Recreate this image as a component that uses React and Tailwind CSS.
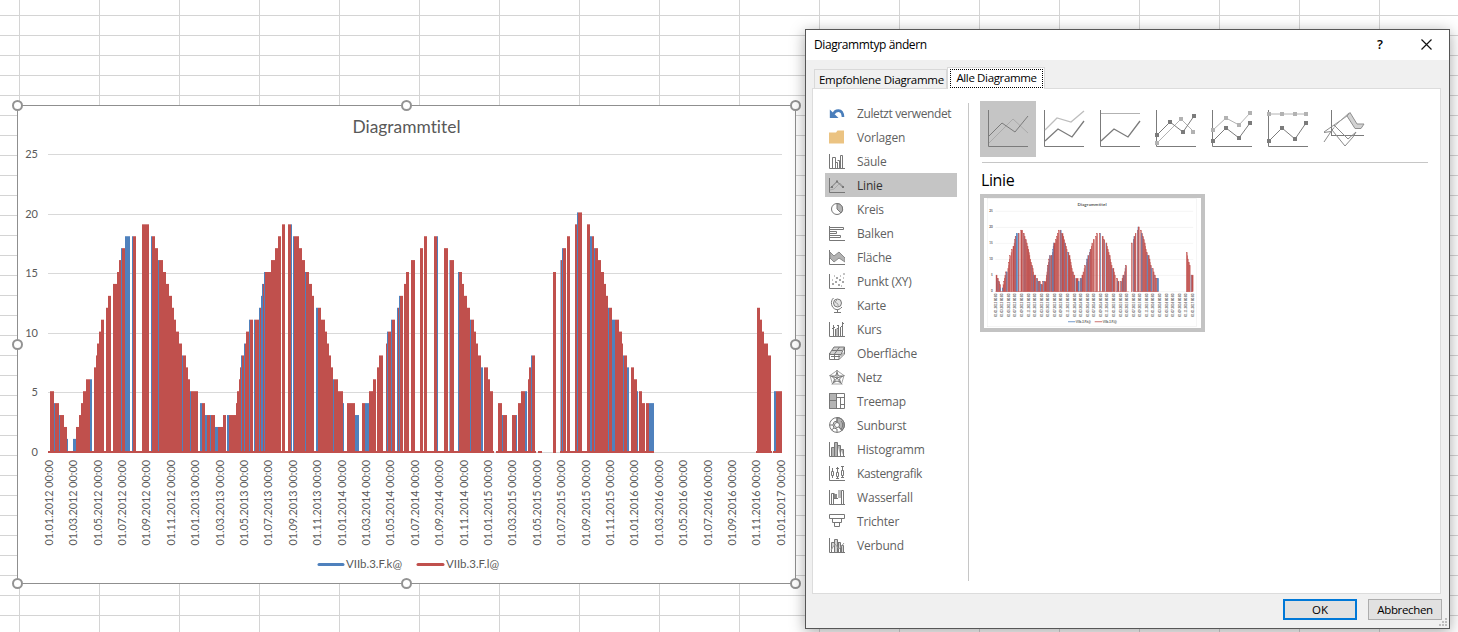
import React from 'react';
import clsx from 'clsx';

// [x start, x end, value, series] - series defaults to the second (red) one
const BARS = [
  [50, 54, 5], [54, 55, 4, 'b'], [55, 59, 4], [59, 60, 3, 'b'], [60, 64, 3], [64, 67, 2], [67, 68, 1, 'b'],
  [73, 76, 1, 'b'], [76, 79, 2], [79, 81, 3], [81, 83, 4], [83, 86, 5], [86, 90, 6], [90, 92, 6, 'b'],
  [94, 96, 7], [96, 97, 8], [97, 99, 9], [99, 101, 10], [101, 104, 11], [106, 108, 12], [108, 111, 13],
  [113, 117, 14], [117, 119, 15], [119, 121, 16], [121, 122, 17, 'b'], [122, 125, 17], [125, 130, 18, 'b'],
  [132, 133, 18, 'b'], [133, 136, 18], [142, 149, 19], [151, 152, 18, 'b'], [152, 155, 18], [155, 158, 17],
  [158, 159, 16, 'b'], [159, 163, 16], [163, 166, 15], [166, 169, 14], [169, 172, 13], [172, 174, 12],
  [174, 176, 11], [176, 179, 10], [179, 182, 9], [182, 183, 8, 'b'], [183, 186, 8], [186, 188, 7],
  [188, 190, 6], [190, 191, 5, 'b'], [191, 198, 5], [200, 202, 4, 'b'], [202, 205, 4], [205, 207, 3, 'b'],
  [207, 210, 3], [210, 211, 3, 'b'], [211, 215, 3], [215, 218, 2, 'b'], [218, 223, 2], [223, 226, 3],
  [227, 229, 3, 'b'], [229, 236, 3], [236, 237, 4], [237, 239, 5], [239, 240, 6], [240, 241, 7],
  [241, 242, 8, 'b'], [242, 244, 8], [244, 245, 9, 'b'], [245, 246, 9], [246, 249, 10], [249, 250, 11, 'b'],
  [250, 253, 11], [254, 255, 11, 'b'], [255, 259, 11], [259, 260, 12, 'b'], [260, 261, 12],
  [261, 262, 13, 'b'], [262, 263, 14, 'b'], [263, 264, 14], [264, 265, 15, 'b'], [265, 271, 15],
  [271, 275, 16], [275, 278, 17], [278, 281, 18], [282, 285, 19], [288, 291, 19], [291, 292, 19, 'b'],
  [293, 294, 18, 'b'], [294, 299, 18], [299, 302, 17], [302, 305, 16], [305, 306, 15, 'b'], [306, 309, 15],
  [309, 312, 14], [312, 314, 13], [316, 318, 12, 'b'], [318, 321, 12], [321, 325, 11], [325, 327, 10],
  [327, 329, 9], [329, 331, 8], [331, 333, 7], [333, 334, 6, 'b'], [334, 338, 6], [338, 343, 5],
  [343, 344, 4, 'b'], [347, 355, 4], [355, 359, 3, 'b'], [362, 365, 4], [365, 369, 4, 'b'], [369, 373, 5],
  [373, 376, 6], [377, 379, 7], [379, 383, 8], [386, 387, 9], [387, 388, 10, 'b'], [388, 391, 10],
  [391, 392, 11, 'b'], [392, 395, 11], [397, 398, 12, 'b'], [398, 399, 12], [399, 400, 13, 'b'],
  [400, 403, 13], [404, 406, 14], [406, 409, 15], [411, 415, 16], [420, 423, 17], [424, 427, 18],
  [434, 437, 18], [437, 438, 18, 'b'], [444, 448, 17], [449.4, 450, 16, 'b'], [450, 454, 16],
  [458, 459, 15, 'b'], [459, 462, 15], [462, 464, 14], [464, 467, 13], [467, 470, 12], [470, 471, 11, 'b'],
  [471, 474, 11], [474, 476, 10], [476, 478, 9], [478, 481, 8], [481, 483, 7, 'b'], [484, 488, 7],
  [488, 490, 6], [490, 493, 5], [498, 502, 4], [502, 503, 3, 'b'], [503, 507, 3], [512, 516, 3],
  [516, 517, 3, 'b'], [518, 521, 4], [521, 525, 5], [525, 527, 5, 'b'], [528, 529, 6], [529, 531, 7],
  [531, 532, 8, 'b'], [532, 535, 8], [553, 556, 15], [560.4, 561, 16, 'b'], [561, 562, 16],
  [562, 563, 17, 'b'], [563, 566, 17], [567, 570, 18], [575, 577, 19], [577, 578, 20, 'b'], [578, 582, 20],
  [587, 590, 19], [590, 592, 18, 'b'], [592, 594, 18], [594, 595, 17, 'b'], [595, 598, 17], [598, 601, 16],
  [601, 604, 15], [604, 606, 14], [606, 608, 13], [608, 609, 12, 'b'], [609, 612, 12], [612, 615, 11, 'b'],
  [615, 619, 11], [619, 622, 10], [622, 623, 9], [623, 624, 8, 'b'], [624, 627, 8], [627, 629, 7, 'b'],
  [631, 634, 7], [634, 637, 6], [637, 638, 5, 'b'], [639, 642, 5], [642, 645, 4], [646, 649, 4],
  [649, 654, 4, 'b'], [757, 760, 12], [760, 762, 11], [762, 764, 10], [764, 768, 9], [768, 771, 8],
  [774, 776, 5, 'b'], [776, 782, 5],
];

const ZERO_RUNS = [[48, 494], [496, 536], [538, 542], [553, 556], [560, 654], [756, 772], [773, 782]];

const GRID = [[25, 154], [20, 214], [15, 273], [10, 333], [5, 392], [0, 452]];

const DATES = Array.from({ length: 31 }, (_, i) => {
  const month = ['01', '03', '05', '07', '09', '11'][i % 6];
  return `01.${month}.${2012 + Math.floor(i / 6)} 00:00`;
});

const BLUE = '#4f81bd';
const RED = '#c0504d';

// preview: small version, where bars get a stroke so that they close up when scaled down
function Chart({ width, height, border, preview }) {
  return (
    <svg
      width={width}
      height={height}
      viewBox="17 105 779 479"
      className="block overflow-visible [font-variant-ligatures:none]"
      fontFamily="Lato, sans-serif"
      fontWeight={preview ? 700 : 400}
      fill="#595959"
    >
      <rect x="17.5" y="105.5" width="778" height="478" fill="#fff" stroke={border} />
      <text x="352.5" y="133" fontSize="16.5" textLength="108" lengthAdjust="spacingAndGlyphs">Diagrammtitel</text>
      {GRID.map(([value, y]) => (
        <g key={value}>
          <line x1="48" x2="782" y1={y + 0.5} y2={y + 0.5} stroke="#d9d9d9" />
          <text x="38" y={y + 3.5} fontSize="11" textAnchor="end">{value}</text>
        </g>
      ))}
      {BARS.map(([x1, x2, value, series]) => (
        <rect
          key={x1}
          x={x1}
          y={450.8 - value * 11.92}
          width={x2 - x1}
          height={value * 11.92 + 1.2}
          fill={series === 'b' ? BLUE : RED}
          stroke={series === 'b' ? BLUE : RED}
          strokeWidth={preview ? 1.3 : 0}
        />
      ))}
      {ZERO_RUNS.map(([x1, x2]) => (
        <rect key={x1} x={x1} y="451" width={x2 - x1} height="2" fill={RED} />
      ))}
      {DATES.map((date, i) => (
        <text
          key={date}
          transform={`translate(${52.8 + i * 24.4} 545.5) rotate(-90)`}
          fontSize="11"
          textLength="85.5"
          lengthAdjust="spacingAndGlyphs"
        >
          {date}
        </text>
      ))}
      <g fontSize="11" strokeWidth="3" strokeLinecap="round">
        <line x1="319" x2="343" y1="564.5" y2="564.5" stroke={BLUE} />
        <text x="346" y="568" textLength="56" lengthAdjust="spacingAndGlyphs">VIIb.3.F.k@</text>
        <line x1="418" x2="443" y1="564.5" y2="564.5" stroke={RED} />
        <text x="446" y="568" textLength="53" lengthAdjust="spacingAndGlyphs">VIIb.3.F.l@</text>
      </g>
    </svg>
  );
}

const HANDLES = [
  'left-[-5px] top-[-5px]', 'left-[384px] top-[-5px]', 'left-[773px] top-[-5px]',
  'left-[-5px] top-[234px]', 'left-[773px] top-[234px]',
  'left-[-5px] top-[473px]', 'left-[384px] top-[473px]', 'left-[773px] top-[473px]',
];

const AXES = <path d="M.5 1v14.5H16" />;

const TYPES = [
  {
    name: 'Zuletzt verwendet',
    icon: (
      <>
        <path d="M4.500 9C6 5 13.500 3 14 12" stroke="#4a7ebb" strokeWidth="2.600" />
        <path d="M.8 4.500V13H9.500z" fill="#4a7ebb" stroke="none" />
      </>
    ),
  },
  {
    name: 'Vorlagen',
    icon: <path d="M0 3.500h7l1.500-2h6.500v13H0z" fill="#ebc382" stroke="none" />,
  },
  {
    name: 'Säule',
    icon: <>{AXES}<path d="M3.500 15V4.500h3V15M6.500 9.500h2V15M8.500 7.500h2V15M11.500 15V2.500h2V15" /></>,
  },
  {
    name: 'Linie',
    icon: (
      <>
        {AXES}
        <path d="M1 13l4-1 6-6 4 4" stroke="#aaa" />
        <path d="M1.500 11L8 4.500l6 6" />
        <path d="M2 9h2v2H2zM7 3.500h2v2H7zM13 9h2v2h-2z" fill="#777" stroke="none" />
      </>
    ),
  },
  {
    name: 'Kreis',
    icon: <><circle cx="8" cy="8" r="5.500" /><path d="M8 2.500V8l4 4A5.500 5.500 0 0 0 8 2.500z" fill="#b3b3b3" /></>,
  },
  {
    name: 'Balken',
    icon: <>{AXES}<path d="M1 2.500h13.500v2H1M1 6.500h6.500v2H1M1 10.500h10.500v2H1" /></>,
  },
  {
    name: 'Fläche',
    icon: (
      <>
        {AXES}
        <path d="M1 3l4 4 5-4 6 6v4l-6-4-5 4-4-4z" fill="#b3b3b3" stroke="#8a8a8a" />
      </>
    ),
  },
  {
    name: 'Punkt (XY)',
    icon: (
      <>
        {AXES}
        <path
          d="M3 11h2M4 10v2M3 7h1M7 5h2M8 4v2M11 3h1M14 1h2M6 9h2M7 8v2M10 7h2M11 6v2M14 5h1M9 12h2M10 11v2M13 9h2M14 8v2M5 3h1M12 13h1"
          stroke="#888"
        />
      </>
    ),
  },
  {
    name: 'Karte',
    icon: (
      <>
        <circle cx="8.500" cy="6" r="4" fill="#e3e3e3" />
        <path d="M4.500 1C1 4 2 11 7 12.500c2 .4 4-.2 6-2.500M8.500 12.500V15M5 15.500h7" />
        <path d="M8 3l-2 2 3 2v2" stroke="#a0a0a0" />
      </>
    ),
  },
  {
    name: 'Kurs',
    icon: (
      <>
        {AXES}
        <path d="M4.500 4v11M3 7.500h1.500M4.500 6.500H6M6.500 8v7M9.500 4v11M8 4.500h1.500M9.500 7.500H8v7.500M11.500 6v9M13.500 1v14M12 5.500h1.500M13.500 2.500H15" />
      </>
    ),
  },
  {
    name: 'Oberfläche',
    icon: (
      <>
        <path d="M1 8l4-6h10.500L12 9.500H1z" fill="#d0d0d0" />
        <path d="M.5 8v6.500h9.500l5.500-5.500V2M10 14.500V10M3 5.500h10M5.500 14.500V9l5-7M2 11.500h9l4-4" />
      </>
    ),
  },
  {
    name: 'Netz',
    icon: (
      <>
        <path d="M8 1.500l7 5-2.500 8.500h-9L1 6.500z" stroke="#a5a5a5" />
        <path d="M8 1v8M8 9L.5 6.500M8 9l7.500-2.500M8 9l-5 6.500M8 9l5 6.500M8 3.500l1.500 3.500 4 0-3 3 1 3.500L8 12l-3.500 1.500 1-3.500-3-3h4z" />
      </>
    ),
  },
  {
    name: 'Treemap',
    icon: (
      <>
        <path d="M.5.500h7v15h-7z" fill="#b3b3b3" />
        <path d="M.5.500h15v15H.500zM.5 7.500h7M7.500 4.500h8M11.500 4.500v11M11.500 11.500h4" />
      </>
    ),
  },
  {
    name: 'Sunburst',
    icon: (
      <>
        <path d="M8 .6V8l5 5.500A7.400 7.400 0 0 0 8 .6z" fill="#b3b3b3" />
        <circle cx="8" cy="8" r="7.400" />
        <path d="M8 5.500V.6M12 4a5.500 5.500 0 0 1 0 8" />
        <circle cx="8" cy="8" r="2.500" fill="#fff" />
        <path d="M4 8a4 4 0 0 1 4-4M4 8H.6M4 8a4 4 0 0 0 4 4M5 11l-2.500 2M8 12v3.400M10 10l3 3.500" />
      </>
    ),
  },
  {
    name: 'Histogramm',
    icon: <>{AXES}<path d="M2.500 15V6.500h3V1.500h3V15M5.500 6v9M8.500 4.500h3V15M11.500 8.500h3V15" fill="#b3b3b3" /></>,
  },
  {
    name: 'Kastengrafik',
    icon: (
      <>
        {AXES}
        <path d="M3.500 3v3M2.500 6.500h2v4h-2zM3.500 11v2M8.500 2v5M7.500 7.500h2v4h-2zM8.500 12v1.500M13.500 1v4M12.500 5.500h2v5h-2zM13.500 11v2M12 1.500h3M7 3.500h3M12 12.500h3M7 13.500h3" />
      </>
    ),
  },
  {
    name: 'Wasserfall',
    icon: (
      <>
        {AXES}
        <path d="M9 1h3v8H9z" fill="#bbb" stroke="none" />
        <path d="M5 5h3v4H5z" fill="#8a8a8a" stroke="none" />
        <path d="M2.500 15V4.500h3M4.500 5v10M5 9.500h4M12.500 15V1.500h2V15" />
      </>
    ),
  },
  {
    name: 'Trichter',
    icon: <path d="M.5 1.500h15v4H.500zM3.500 5.500h9v4h-9zM5.500 9.500h5v4h-5z" />,
  },
  {
    name: 'Verbund',
    icon: (
      <>
        {AXES}
        <path d="M2.500 15V5.500h3M5.500 15V2.500h3V15M9.500 5v10M9.500 5.500h2V15M12.500 15V8.500h2V15" fill="#d2d2d2" />
        <path d="M2 13l4-6 4 5 5-6" stroke="#999" />
      </>
    ),
  },
];

const DARK = '#7b7b7b';
const LIGHT = '#b2b2b2';

function Markers({ points, color }) {
  return points.map(([x, y]) => <rect key={x} x={x - 2} y={y - 2} width="4" height="4" fill={color} stroke="none" />);
}

const SUBTYPES = [
  <>
    <path d="M9 42l24-24 15 14" stroke="#aaa" />
    <path d="M9 35l13-13 13 9 13-16" stroke={DARK} />
  </>,
  <>
    <path d="M9 29l12-12 14 4 13-11" stroke="#bdbdbd" strokeWidth="1.300" />
    <path d="M9 40l13-12 14 8 12-16" stroke={DARK} strokeWidth="1.300" />
  </>,
  <>
    <path d="M9 12.500h39" stroke={LIGHT} />
    <path d="M9 40l13-12 14 8 12-16" stroke={DARK} strokeWidth="1.300" />
  </>,
  <>
    <path d="M9 42l24-24 13 13" stroke={LIGHT} />
    <path d="M9 34l13-13 13 10 11-16" stroke={DARK} />
    <Markers points={[[9, 42], [33, 18], [45, 31]]} color={LIGHT} />
    <Markers points={[[9, 34], [22, 21], [35, 31], [46, 15]]} color={DARK} />
  </>,
  <>
    <path d="M9 29l13-12 13 7 11-12" stroke={LIGHT} />
    <path d="M9 40l13-13 13 10 11-15" stroke={DARK} />
    <Markers points={[[9, 29], [22, 17], [35, 24], [46, 12]]} color={LIGHT} />
    <Markers points={[[9, 40], [22, 27], [35, 37], [46, 22]]} color={DARK} />
  </>,
  <>
    <path d="M9 13h37" stroke={LIGHT} />
    <path d="M9 40l13-13 13 11 11-16" stroke={DARK} />
    <Markers points={[[9, 13], [22, 13], [35, 13], [46, 13]]} color={LIGHT} />
    <Markers points={[[9, 40], [22, 27], [35, 38], [46, 22]]} color={DARK} />
  </>,
];

function Icon3D() {
  return (
    <svg width="56" height="56" fill="none" stroke={DARK}>
      <path d="M15.500 9v26M15 34.500h33" />
      <path d="M31 15l3-3.500 7 11.500h7l-3 4.500h-6z" fill="#d2d2d2" stroke="#8f8f8f" />
      <path d="M18 25.500l15-13.500M18 24l13-9" stroke="#9a9a9a" />
      <path d="M8 31l10-7 14 14 8-7-3 5-8 9-13-16-8 12M8 31.500l7-1 3-4" stroke="#8a8a8a" />
    </svg>
  );
}

function ChangeTypeDialog() {
  return (
    <div className="absolute left-[805px] top-[29px] flex h-[600px] w-[645px] flex-col border border-[#565656] bg-[#f0f0f0] text-xs text-black shadow-[0_3px_14px_rgba(0,0,0,0.35)]">
      <header className="flex h-[30px] shrink-0 items-center justify-between bg-white pl-2 pr-[17px]">
        <span className="tracking-[-0.4px]">Diagrammtyp ändern</span>
        <div className="flex items-center gap-[38px]">
          <span className="text-[13px] font-semibold">?</span>
          <svg width="11" height="11" stroke="#111" strokeWidth="1.200">
            <path d="M.5.500l10 10M10.500.500l-10 10" />
          </svg>
        </div>
      </header>

      {/* Tabs */}
      <nav className="relative z-10 -mb-px mt-[7px] flex h-[22px] shrink-0 items-end pl-2">
        <div className="mb-px flex h-[19px] w-[133px] items-center border border-b-0 border-[#d9d9d9] pl-1 pt-0.5 text-[11.5px] whitespace-nowrap">
          <span className="tracking-[-0.28px]">Empfohlene Diagramme</span>
        </div>
        <div className="h-[22px] w-[98px] border border-b-0 border-[#d9d9d9] bg-white pl-0.5 pr-px pt-px">
          <div className="flex h-[19px] items-center justify-center border border-dotted border-black pb-px text-[11.5px] tracking-[-0.36px] whitespace-nowrap">
            Alle Diagramme
          </div>
        </div>
      </nav>

      <main className="ml-1.5 flex h-[506px] w-[629px] shrink-0 border border-[#dcdcdc] bg-white">
        <ul className="ml-3 mt-3 w-[132px]">
          {TYPES.map(({ name, icon }) => (
            <li
              key={name}
              className={clsx(
                'flex h-6 items-center gap-3 pl-1 whitespace-nowrap',
                name === 'Linie' ? 'bg-[#c5c5c5] text-[#333]' : 'text-[#5f5f5f]',
                name.length > 11 ? 'tracking-[-0.38px]' : 'tracking-[-0.18px]'
              )}
            >
              <svg width="16" height="16" viewBox="0 0 16 16" fill="none" stroke="#777" className="shrink-0">
                {icon}
              </svg>
              <span className="pt-px">{name}</span>
            </li>
          ))}
        </ul>
        <div className="ml-[11px] mt-3.5 h-[478px] w-px bg-[#c6c6c6]" />

        {/* Subtypes and preview */}
        <section className="ml-[11px] mt-3">
          <div className="flex">
            {SUBTYPES.map((drawing, i) => (
              <div key={i} className={clsx('h-14 w-14', i === 0 && 'bg-[#c5c5c5]')}>
                <svg width="56" height="56" fill="none">
                  <path d="M8.500 9v36.500H48" stroke={DARK} />
                  {drawing}
                </svg>
              </div>
            ))}
            <Icon3D />
          </div>
          <div className="ml-0.5 mt-[5px] h-px w-[446px] bg-[#c6c6c6]" />
          <h2 className="ml-px mt-[5px] h-[26px] text-base leading-6 tracking-[-0.4px]">Linie</h2>
          <div className="h-[138px] w-[225px] border-4 border-[#c3c3c3] bg-white pl-[3px]">
            <Chart width={210} height={129} border="#d9d9d9" preview />
          </div>
        </section>
      </main>

      <footer className="mt-[5px] flex justify-end gap-[11px] pr-[7px]">
        <button className="h-[21px] w-[74px] border-2 border-[#0078d7] bg-[#e1e1e1] text-[11.5px] leading-4">OK</button>
        <button className="h-[21px] w-[74px] border border-[#adadad] bg-[#e1e1e1] text-[11.5px] leading-4 tracking-[-0.35px]">
          Abbrechen
        </button>
      </footer>
      <svg width="8" height="8" fill="#bdbdbd" className="absolute bottom-0.5 right-0.5">
        <path d="M6 0h2v2H6zM3 3h2v2H3zM6 3h2v2H6zM0 6h2v2H0zM3 6h2v2H3zM6 6h2v2H6z" />
      </svg>
    </div>
  );
}

export default function App() {
  return (
    <div className="relative h-[632px] w-[1458px] overflow-hidden bg-white bg-[linear-gradient(to_right,#d4d4d4_1px,transparent_1px),linear-gradient(to_bottom,#d4d4d4_1px,transparent_1px)] bg-[size:80px_20px] bg-[position:19px_15px] font-['Open_Sans','Noto_Sans',sans-serif]">
      <div className="absolute left-[17px] top-[105px]">
        <Chart width={779} height={479} border="#8f8f8f" />
        {HANDLES.map((place) => (
          <span key={place} className={clsx('absolute h-[11px] w-[11px] rounded-full border-2 border-[#939393] bg-white', place)} />
        ))}
      </div>
      <ChangeTypeDialog />
    </div>
  );
}
